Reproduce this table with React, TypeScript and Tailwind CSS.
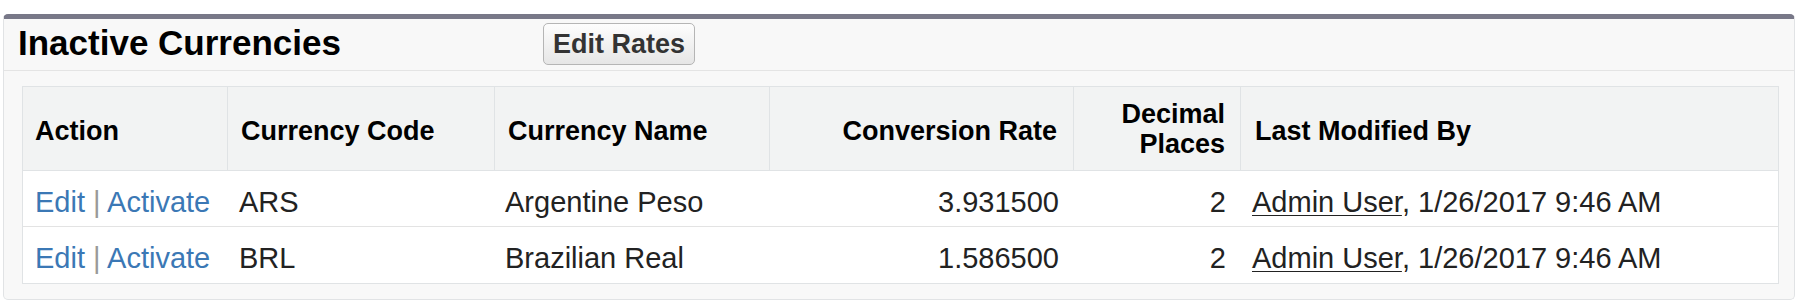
const cols = "grid grid-cols-[204px_267px_275px_304px_167px_538px]";

const rows = [
  { code: "ARS", name: "Argentine Peso", rate: "3.931500", places: "2" },
  { code: "BRL", name: "Brazilian Real", rate: "1.586500", places: "2" },
];

const App = () => {
  return (
    <div className="w-[1800px] h-[302px] bg-white pt-[14px] pl-[3px] font-['Liberation_Sans',Arial,sans-serif]">
      <div className="w-[1792px] h-[286px] bg-[#f8f8f8] border border-[#e1e3e5] border-t-[5px] border-t-[#787888] rounded-[5px]">
        <div className="flex h-[52px] border-b border-[#e4e4e4]">
          <h2 className="w-[539px] pl-[14px] pt-[4px] text-[35px] leading-[40px] font-bold text-black">
            Inactive Currencies
          </h2>
          <button className="mt-[4px] h-[42px] px-[9px] rounded-[5px] border border-[#b5b5b5] bg-gradient-to-b from-[#fdfdfd] to-[#e6e6e6] text-[27px] leading-[30px] font-bold text-[#333]">
            Edit Rates
          </button>
        </div>
        <div className="mt-[15px] ml-[18px] w-[1757px] border border-[#e0e3e5] bg-white">
          <div className={`${cols} h-[84px] bg-[#f2f3f3] border-b border-[#e0e3e5] text-[27px] leading-[30px] font-bold text-black`}>
            <div className="flex items-center pt-[4px] pl-[12px]">Action</div>
            <div className="flex items-center pt-[4px] pl-[13px] border-l border-[#e0e3e5]">Currency Code</div>
            <div className="flex items-center pt-[4px] pl-[13px] border-l border-[#e0e3e5]">Currency Name</div>
            <div className="flex items-center justify-end pt-[4px] pr-[16px] border-l border-[#e0e3e5]">Conversion Rate</div>
            <div className="flex items-center justify-end text-right pt-[1px] pr-[15px] border-l border-[#e0e3e5]">
              Decimal
              <br />
              Places
            </div>
            <div className="flex items-center pt-[4px] pl-[14px] border-l border-[#e0e3e5]">Last Modified By</div>
          </div>
          {rows.map((r, i) => (
            <div
              key={r.code}
              className={`${cols} h-[56px] pt-[15px] text-[29px] leading-[33px] text-[#222] ${i === 0 ? "border-b border-[#e3e3e3]" : ""}`}
            >
              <div className="pl-[12px] whitespace-nowrap">
                <a className="text-[#3b78b5]">Edit</a>
                <span className="text-[#999]"> | </span>
                <a className="text-[#3b78b5]">Activate</a>
              </div>
              <div className="pl-[12px]">{r.code}</div>
              <div className="pl-[11px]">{r.name}</div>
              <div className="text-right pr-[14px]">{r.rate}</div>
              <div className="text-right pr-[14px]">{r.places}</div>
              <div className="pl-[12px] whitespace-nowrap">
                <a className="underline underline-offset-[3px] decoration-1">Admin User</a>, 1/26/2017 9:46 AM
              </div>
            </div>
          ))}
        </div>
      </div>
    </div>
  );
};

export default App;
